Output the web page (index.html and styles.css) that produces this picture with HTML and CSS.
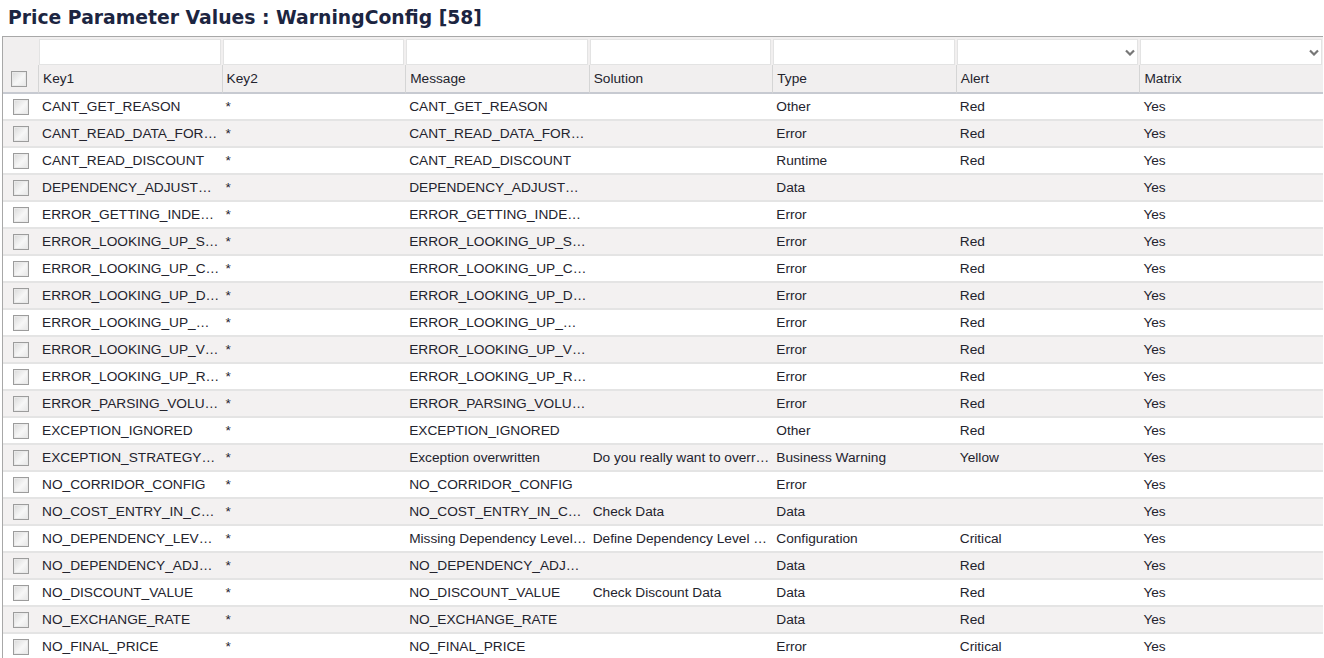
FILE: index.html
```html
<!DOCTYPE html>
<html>

<head>
  <title>Price Parameter Values</title>
  <link rel="stylesheet" href="styles.css">
</head>

<body>
  <h1 class="page-title">Price Parameter Values : WarningConfig [58]</h1>

  <table class="grid">
    <colgroup>
      <col class="col-check">
      <col><col><col><col><col><col><col>
    </colgroup>
    <thead>
      <tr class="filter-row">
        <td></td>
        <td><div class="filter"></div></td>
        <td><div class="filter"></div></td>
        <td><div class="filter"></div></td>
        <td><div class="filter"></div></td>
        <td><div class="filter"></div></td>
        <td><div class="filter select"><svg class="chevron" width="10" height="7" viewBox="0 0 10 7"><path d="M1 1.5 L5 5.5 L9 1.5" fill="none" stroke="#777" stroke-width="2.2"/></svg></div></td>
        <td><div class="filter select"><svg class="chevron" width="10" height="7" viewBox="0 0 10 7"><path d="M1 1.5 L5 5.5 L9 1.5" fill="none" stroke="#777" stroke-width="2.2"/></svg></div></td>
      </tr>
      <tr class="header-row">
        <th class="check head-check"><span class="cb"></span></th>
        <th>Key1</th>
        <th>Key2</th>
        <th>Message</th>
        <th>Solution</th>
        <th>Type</th>
        <th>Alert</th>
        <th>Matrix</th>
      </tr>
    </thead>
    <tbody>
      <tr><td class="check"><span class="cb"></span></td><td>CANT_GET_REASON</td><td>*</td><td>CANT_GET_REASON</td><td></td><td>Other</td><td>Red</td><td>Yes</td></tr>
      <tr><td class="check"><span class="cb"></span></td><td>CANT_READ_DATA_FOR_PRICING</td><td>*</td><td>CANT_READ_DATA_FOR_PRICING</td><td></td><td>Error</td><td>Red</td><td>Yes</td></tr>
      <tr><td class="check"><span class="cb"></span></td><td>CANT_READ_DISCOUNT</td><td>*</td><td>CANT_READ_DISCOUNT</td><td></td><td>Runtime</td><td>Red</td><td>Yes</td></tr>
      <tr><td class="check"><span class="cb"></span></td><td>DEPENDENCY_ADJUSTMENT_FAILED</td><td>*</td><td>DEPENDENCY_ADJUSTMENT_FAILED</td><td></td><td>Data</td><td></td><td>Yes</td></tr>
      <tr><td class="check"><span class="cb"></span></td><td>ERROR_GETTING_INDEX_VALUE</td><td>*</td><td>ERROR_GETTING_INDEX_VALUE</td><td></td><td>Error</td><td></td><td>Yes</td></tr>
      <tr><td class="check"><span class="cb"></span></td><td>ERROR_LOOKING_UP_SURCHARGE</td><td>*</td><td>ERROR_LOOKING_UP_SURCHARGE</td><td></td><td>Error</td><td>Red</td><td>Yes</td></tr>
      <tr><td class="check"><span class="cb"></span></td><td>ERROR_LOOKING_UP_COST</td><td>*</td><td>ERROR_LOOKING_UP_COST</td><td></td><td>Error</td><td>Red</td><td>Yes</td></tr>
      <tr><td class="check"><span class="cb"></span></td><td>ERROR_LOOKING_UP_DISCOUNT</td><td>*</td><td>ERROR_LOOKING_UP_DISCOUNT</td><td></td><td>Error</td><td>Red</td><td>Yes</td></tr>
      <tr><td class="check"><span class="cb"></span></td><td>ERROR_LOOKING_UP_MARGIN</td><td>*</td><td>ERROR_LOOKING_UP_MARGIN</td><td></td><td>Error</td><td>Red</td><td>Yes</td></tr>
      <tr><td class="check"><span class="cb"></span></td><td>ERROR_LOOKING_UP_VOLUME</td><td>*</td><td>ERROR_LOOKING_UP_VOLUME</td><td></td><td>Error</td><td>Red</td><td>Yes</td></tr>
      <tr><td class="check"><span class="cb"></span></td><td>ERROR_LOOKING_UP_RATE</td><td>*</td><td>ERROR_LOOKING_UP_RATE</td><td></td><td>Error</td><td>Red</td><td>Yes</td></tr>
      <tr><td class="check"><span class="cb"></span></td><td>ERROR_PARSING_VOLUME</td><td>*</td><td>ERROR_PARSING_VOLUME</td><td></td><td>Error</td><td>Red</td><td>Yes</td></tr>
      <tr><td class="check"><span class="cb"></span></td><td>EXCEPTION_IGNORED</td><td>*</td><td>EXCEPTION_IGNORED</td><td></td><td>Other</td><td>Red</td><td>Yes</td></tr>
      <tr><td class="check"><span class="cb"></span></td><td>EXCEPTION_STRATEGY_OVERWRITTEN</td><td>*</td><td>Exception overwritten</td><td>Do you really want to override the strategy?</td><td>Business Warning</td><td>Yellow</td><td>Yes</td></tr>
      <tr><td class="check"><span class="cb"></span></td><td>NO_CORRIDOR_CONFIG</td><td>*</td><td>NO_CORRIDOR_CONFIG</td><td></td><td>Error</td><td></td><td>Yes</td></tr>
      <tr><td class="check"><span class="cb"></span></td><td>NO_COST_ENTRY_IN_CURRENCY</td><td>*</td><td>NO_COST_ENTRY_IN_CURRENCY</td><td>Check Data</td><td>Data</td><td></td><td>Yes</td></tr>
      <tr><td class="check"><span class="cb"></span></td><td>NO_DEPENDENCY_LEVEL_FOUND</td><td>*</td><td>Missing Dependency Level for product</td><td>Define Dependency Level for product</td><td>Configuration</td><td>Critical</td><td>Yes</td></tr>
      <tr><td class="check"><span class="cb"></span></td><td>NO_DEPENDENCY_ADJUSTMENT</td><td>*</td><td>NO_DEPENDENCY_ADJUSTMENT</td><td></td><td>Data</td><td>Red</td><td>Yes</td></tr>
      <tr><td class="check"><span class="cb"></span></td><td>NO_DISCOUNT_VALUE</td><td>*</td><td>NO_DISCOUNT_VALUE</td><td>Check Discount Data</td><td>Data</td><td>Red</td><td>Yes</td></tr>
      <tr><td class="check"><span class="cb"></span></td><td>NO_EXCHANGE_RATE</td><td>*</td><td>NO_EXCHANGE_RATE</td><td></td><td>Data</td><td>Red</td><td>Yes</td></tr>
      <tr><td class="check"><span class="cb"></span></td><td>NO_FINAL_PRICE</td><td>*</td><td>NO_FINAL_PRICE</td><td></td><td>Error</td><td>Critical</td><td>Yes</td></tr>
    </tbody>
  </table>
</body>
</html>
```

FILE: styles.css
```css
body {
  margin: 0;
  font-family: "Liberation Sans", Arial, sans-serif;
  font-size: 13.7px;
  color: #23232d;
  background: #fff;
  overflow: hidden;
}

.page-title {
  margin: 0;
  height: 36px;
  padding-left: 8px;
  box-sizing: border-box;
  font-family: "DejaVu Sans", Verdana, sans-serif;
  font-size: 18.8px;
  font-weight: bold;
  line-height: 35px;
  color: #1c2541;
}

.grid {
  margin-left: 2px;
  width: 1321px;
  table-layout: fixed;
  border-collapse: separate;
  border-spacing: 0;
  border-top: 1px solid #a8a8a8;
  border-left: 1px solid #a8a8a8;
}

.col-check {
  width: 35px;
}

.grid td,
.grid th {
  padding: 0 2px 1px 4px;
  white-space: nowrap;
  overflow: hidden;
  text-overflow: ellipsis;
  text-align: left;
  font-weight: normal;
}

.filter-row td {
  height: 28px;
  padding: 1px 1px 0 1px;
  box-sizing: border-box;
  background: #f1efef;
}

.filter {
  height: 26px;
  box-sizing: border-box;
  border: 1px solid #e3e3e3;
  background: #fff;
  position: relative;
}

.chevron {
  position: absolute;
  right: 2px;
  top: 9px;
}

.header-row th {
  height: 29px;
  box-sizing: border-box;
  background: #f1efef;
  border-left: 1px solid #d5d5d5;
  border-bottom: 2px solid #c7cad1;
}

.header-row th.head-check {
  border-left: none;
}

.grid tbody td {
  height: 27px;
  box-sizing: border-box;
  border-bottom: 2px solid #e4e4e4;
  background: #fff;
}

.grid tbody tr:nth-child(even) td {
  background: #f3f1f1;
}

.grid .check {
  padding: 0;
  text-align: center;
}

.cb {
  display: inline-block;
  width: 16px;
  height: 16px;
  box-sizing: border-box;
  border: 1px solid #9c9c9c;
  background: linear-gradient(135deg, #d9d9d9 0%, #f7f7f7 55%, #e6e6e6 100%);
  box-shadow: inset 0 0 0 1px #e9e9e9;
  vertical-align: middle;
  margin-left: 1px;
}

.head-check .cb {
  margin-left: -3px;
}
```
